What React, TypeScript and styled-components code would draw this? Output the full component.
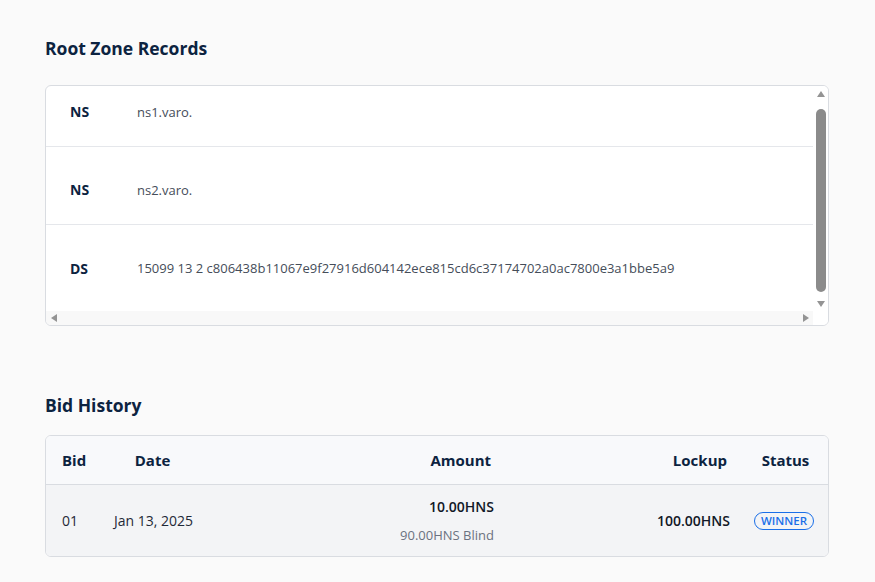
import React, { useEffect, useRef } from "react";
import styled, { createGlobalStyle } from "styled-components";

const GlobalStyle = createGlobalStyle`
  html, body {
    margin: 0;
    padding: 0;
    background: #fafafa;
    font-family: "Open Sans", "Noto Sans", Arial, sans-serif;
  }
`;

const Page = styled.div`
  padding: 36px 46px 24px 45px;
  display: flex;
  flex-direction: column;
`;

const SectionTitle = styled.h2<{ gap?: number }>`
  margin: 0 0 ${({ gap }) => gap ?? 24}px 0;
  font-size: 17.5px;
  font-weight: 700;
  color: #0c2340;
  line-height: 24px;
`;

const Card = styled.div`
  border: 1px solid #d9dce1;
  border-radius: 6px;
  background: #ffffff;
  overflow: hidden;
`;

/* records box: viewport + hand drawn scrollbars */
const ScrollFrame = styled.div`
  display: grid;
  grid-template-columns: 1fr 15px;
  grid-template-rows: 225px 14px;
`;

const Viewport = styled.div`
  overflow: hidden;
`;

const RecordList = styled.div`
  padding-bottom: 8px;
`;

const RecordRow = styled.div`
  display: grid;
  grid-template-columns: 67px 1fr;
  align-items: center;
  height: 78px;
  padding: 8px 0 0 24px;
  box-sizing: border-box;
  border-bottom: 1px solid #e5e7eb;

  &:last-child {
    border-bottom: none;
  }
`;

const RecordType = styled.span`
  font-size: 14px;
  font-weight: 700;
  color: #0c2340;
`;

const RecordValue = styled.span`
  font-size: 13px;
  color: #454d59;
  white-space: nowrap;
`;

const VBar = styled.div`
  display: flex;
  flex-direction: column;
  background: #ffffff;
`;

const HBar = styled.div`
  display: flex;
  align-items: center;
  justify-content: space-between;
  background: #f8f8f8;
  padding: 0 4px 0 5px;
`;

const Corner = styled.div`
  background: #ffffff;
`;

const ArrowBox = styled.div`
  height: 15px;
  display: flex;
  align-items: center;
  justify-content: center;
  flex-shrink: 0;
`;

const Arrow = styled.span<{ dir: "up" | "down" | "left" | "right" }>`
  width: 0;
  height: 0;
  border-style: solid;
  border-color: transparent;
  ${({ dir }) =>
    dir === "up"
      ? "border-width: 0 4.5px 6px 4.5px; border-bottom-color: #949494;"
      : dir === "down"
      ? "border-width: 6px 4.5px 0 4.5px; border-top-color: #949494;"
      : dir === "left"
      ? "border-width: 4.5px 6px 4.5px 0; border-right-color: #949494;"
      : "border-width: 4.5px 0 4.5px 6px; border-left-color: #949494;"}
`;

const Track = styled.div`
  flex: 1;
  padding: 8px 2px 4px 3px;
  display: flex;
`;

const Thumb = styled.div`
  flex: 1;
  background: #8b8b8b;
  border-radius: 5px;
`;

const Spacer = styled.div`
  height: 67px;
`;

const Table = styled.table`
  width: 100%;
  border-collapse: collapse;
  table-layout: fixed;
`;

const HeadRow = styled.tr`
  background: #f8f9fb;
  height: 48px;
  border-bottom: 1px solid #d9dce1;
`;

const Th = styled.th<{ align?: string }>`
  font-size: 15px;
  font-weight: 700;
  color: #0c2340;
  text-align: ${({ align }) => align ?? "left"};
  padding: 0 16px;
  white-space: nowrap;
`;

const BodyRow = styled.tr`
  background: #f3f4f6;
  height: 72px;
`;

const Td = styled.td<{ align?: string }>`
  font-size: 14px;
  color: #1f2937;
  text-align: ${({ align }) => align ?? "left"};
  padding: 0
    ${({ align }) => (align === "right" ? "13px" : align === "center" ? "0" : "16px")};
  vertical-align: middle;
  white-space: nowrap;
`;

const AmountMain = styled.div`
  font-weight: 600;
  color: #111827;
  margin-bottom: 10px;
`;

const AmountSub = styled.div`
  font-size: 13px;
  color: #6b7280;
`;

const Strong = styled.span`
  font-weight: 600;
  color: #111827;
`;

const Badge = styled.span`
  display: inline-block;
  border: 1px solid #1a6fe8;
  color: #1a6fe8;
  border-radius: 999px;
  font-size: 11.5px;
  font-weight: 600;
  padding: 0 6px;
  line-height: 16px;
  margin-right: 3px;
`;

const records = [
  { type: "NS", value: "ns1.varo." },
  { type: "NS", value: "ns2.varo." },
  {
    type: "DS",
    value:
      "15099 13 2 c806438b11067e9f27916d604142ece815cd6c37174702a0ac7800e3a1bbe5a9",
  },
];

export default function App() {
  const viewRef = useRef<HTMLDivElement>(null);

  useEffect(() => {
    // records list sits scrolled to the bottom
    if (viewRef.current) {
      viewRef.current.scrollTop = viewRef.current.scrollHeight;
    }
  }, []);

  return (
    <>
      <GlobalStyle />
      <Page>
        <SectionTitle gap={25}>Root Zone Records</SectionTitle>
        <Card>
          <ScrollFrame>
            <Viewport ref={viewRef}>
              <RecordList>
                {records.map((r, i) => (
                  <RecordRow key={i}>
                    <RecordType>{r.type}</RecordType>
                    <RecordValue>{r.value}</RecordValue>
                  </RecordRow>
                ))}
              </RecordList>
            </Viewport>
            <VBar>
              <ArrowBox>
                <Arrow dir="up" />
              </ArrowBox>
              <Track>
                <Thumb />
              </Track>
              <ArrowBox>
                <Arrow dir="down" />
              </ArrowBox>
            </VBar>
            <HBar>
              <Arrow dir="left" />
              <Arrow dir="right" />
            </HBar>
            <Corner />
          </ScrollFrame>
        </Card>

        <Spacer />

        <SectionTitle gap={18}>Bid History</SectionTitle>
        <Card>
          <Table>
            <colgroup>
              <col style={{ width: 52 }} />
              <col style={{ width: 109 }} />
              <col style={{ width: 300 }} />
              <col style={{ width: 236 }} />
              <col style={{ width: 85 }} />
            </colgroup>
            <thead>
              <HeadRow>
                <Th>Bid</Th>
                <Th align="center">Date</Th>
                <Th align="right">Amount</Th>
                <Th align="right">Lockup</Th>
                <Th align="center">Status</Th>
              </HeadRow>
            </thead>
            <tbody>
              <BodyRow>
                <Td>01</Td>
                <Td>Jan 13, 2025</Td>
                <Td align="right">
                  <AmountMain>10.00HNS</AmountMain>
                  <AmountSub>90.00HNS Blind</AmountSub>
                </Td>
                <Td align="right">
                  <Strong>100.00HNS</Strong>
                </Td>
                <Td align="center">
                  <Badge>WINNER</Badge>
                </Td>
              </BodyRow>
            </tbody>
          </Table>
        </Card>
      </Page>
    </>
  );
}
